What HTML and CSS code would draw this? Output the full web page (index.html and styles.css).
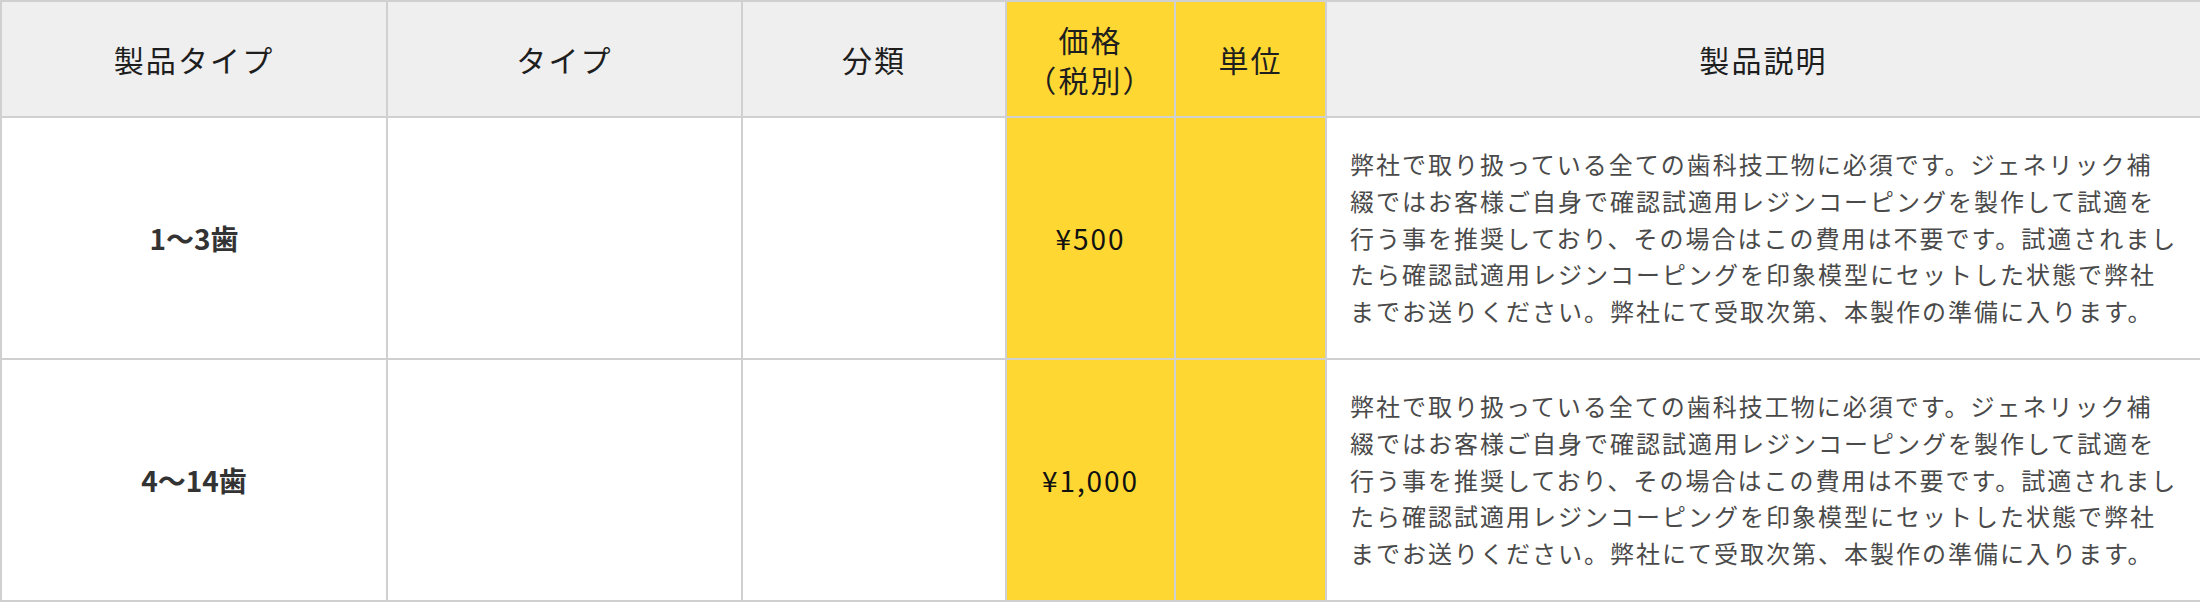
FILE: index.html
```html
<!DOCTYPE html>
<html lang="ja">
<head>
<meta charset="utf-8">
<title>製品価格表</title>
<link rel="stylesheet" href="styles.css">
</head>
<body>
<table class="price-table">
  <colgroup>
    <col class="c-type1">
    <col class="c-type2">
    <col class="c-cat">
    <col class="c-price">
    <col class="c-unit">
    <col class="c-desc">
  </colgroup>
  <thead>
    <tr class="head-row">
      <th>製品タイプ</th>
      <th>タイプ</th>
      <th>分類</th>
      <th class="hl">価格<br>（税別）</th>
      <th class="hl">単位</th>
      <th>製品説明</th>
    </tr>
  </thead>
  <tbody>
    <tr class="body-row">
      <td class="label">1〜3歯</td>
      <td></td>
      <td></td>
      <td class="hl price">¥500</td>
      <td class="hl"></td>
      <td class="desc">弊社で取り扱っている全ての歯科技工物に必須です。ジェネリック補<br>綴ではお客様ご自身で確認試適用レジンコーピングを製作して試適を<br>行う事を推奨しており、その場合はこの費用は不要です。試適されまし<br>たら確認試適用レジンコーピングを印象模型にセットした状態で弊社<br>までお送りください。弊社にて受取次第、本製作の準備に入ります。</td>
    </tr>
    <tr class="body-row">
      <td class="label">4〜14歯</td>
      <td></td>
      <td></td>
      <td class="hl price">¥1,000</td>
      <td class="hl"></td>
      <td class="desc">弊社で取り扱っている全ての歯科技工物に必須です。ジェネリック補<br>綴ではお客様ご自身で確認試適用レジンコーピングを製作して試適を<br>行う事を推奨しており、その場合はこの費用は不要です。試適されまし<br>たら確認試適用レジンコーピングを印象模型にセットした状態で弊社<br>までお送りください。弊社にて受取次第、本製作の準備に入ります。</td>
    </tr>
  </tbody>
</table>
</body>
</html>
```
FILE: styles.css
```css
html, body {
  margin: 0;
  padding: 0;
  background: #ffffff;
}

body {
  font-family: "Noto Sans CJK JP", "Noto Sans", sans-serif;
}

.price-table {
  width: 2200px;
  table-layout: fixed;
  border-collapse: collapse;
}

.c-type1 { width: 386px; }
.c-type2 { width: 355px; }
.c-cat { width: 264px; }
.c-price { width: 169px; }
.c-unit { width: 151px; }
.c-desc { width: 875px; }

.price-table th,
.price-table td {
  border: 2px solid #d0d0d0;
  padding: 0;
  text-align: center;
  vertical-align: middle;
  letter-spacing: 0.07em;
}

.head-row {
  height: 116px;
}

.head-row th {
  background: #efefef;
  font-size: 30px;
  font-weight: 400;
  line-height: 40px;
  color: #1e1e1e;
}

.body-row {
  height: 242px;
}

.price-table .hl {
  background: #ffd733;
}

.price-table .label {
  font-size: 28px;
  font-weight: 700;
  color: #333333;
  letter-spacing: 0;
}

.price {
  font-size: 28px;
  color: #111111;
}

.price-table .desc {
  text-align: left;
  padding-left: 23px;
  font-size: 24px;
  line-height: 1.53;
  letter-spacing: 2px;
  color: #4a4a4a;
  white-space: nowrap;
}
```
